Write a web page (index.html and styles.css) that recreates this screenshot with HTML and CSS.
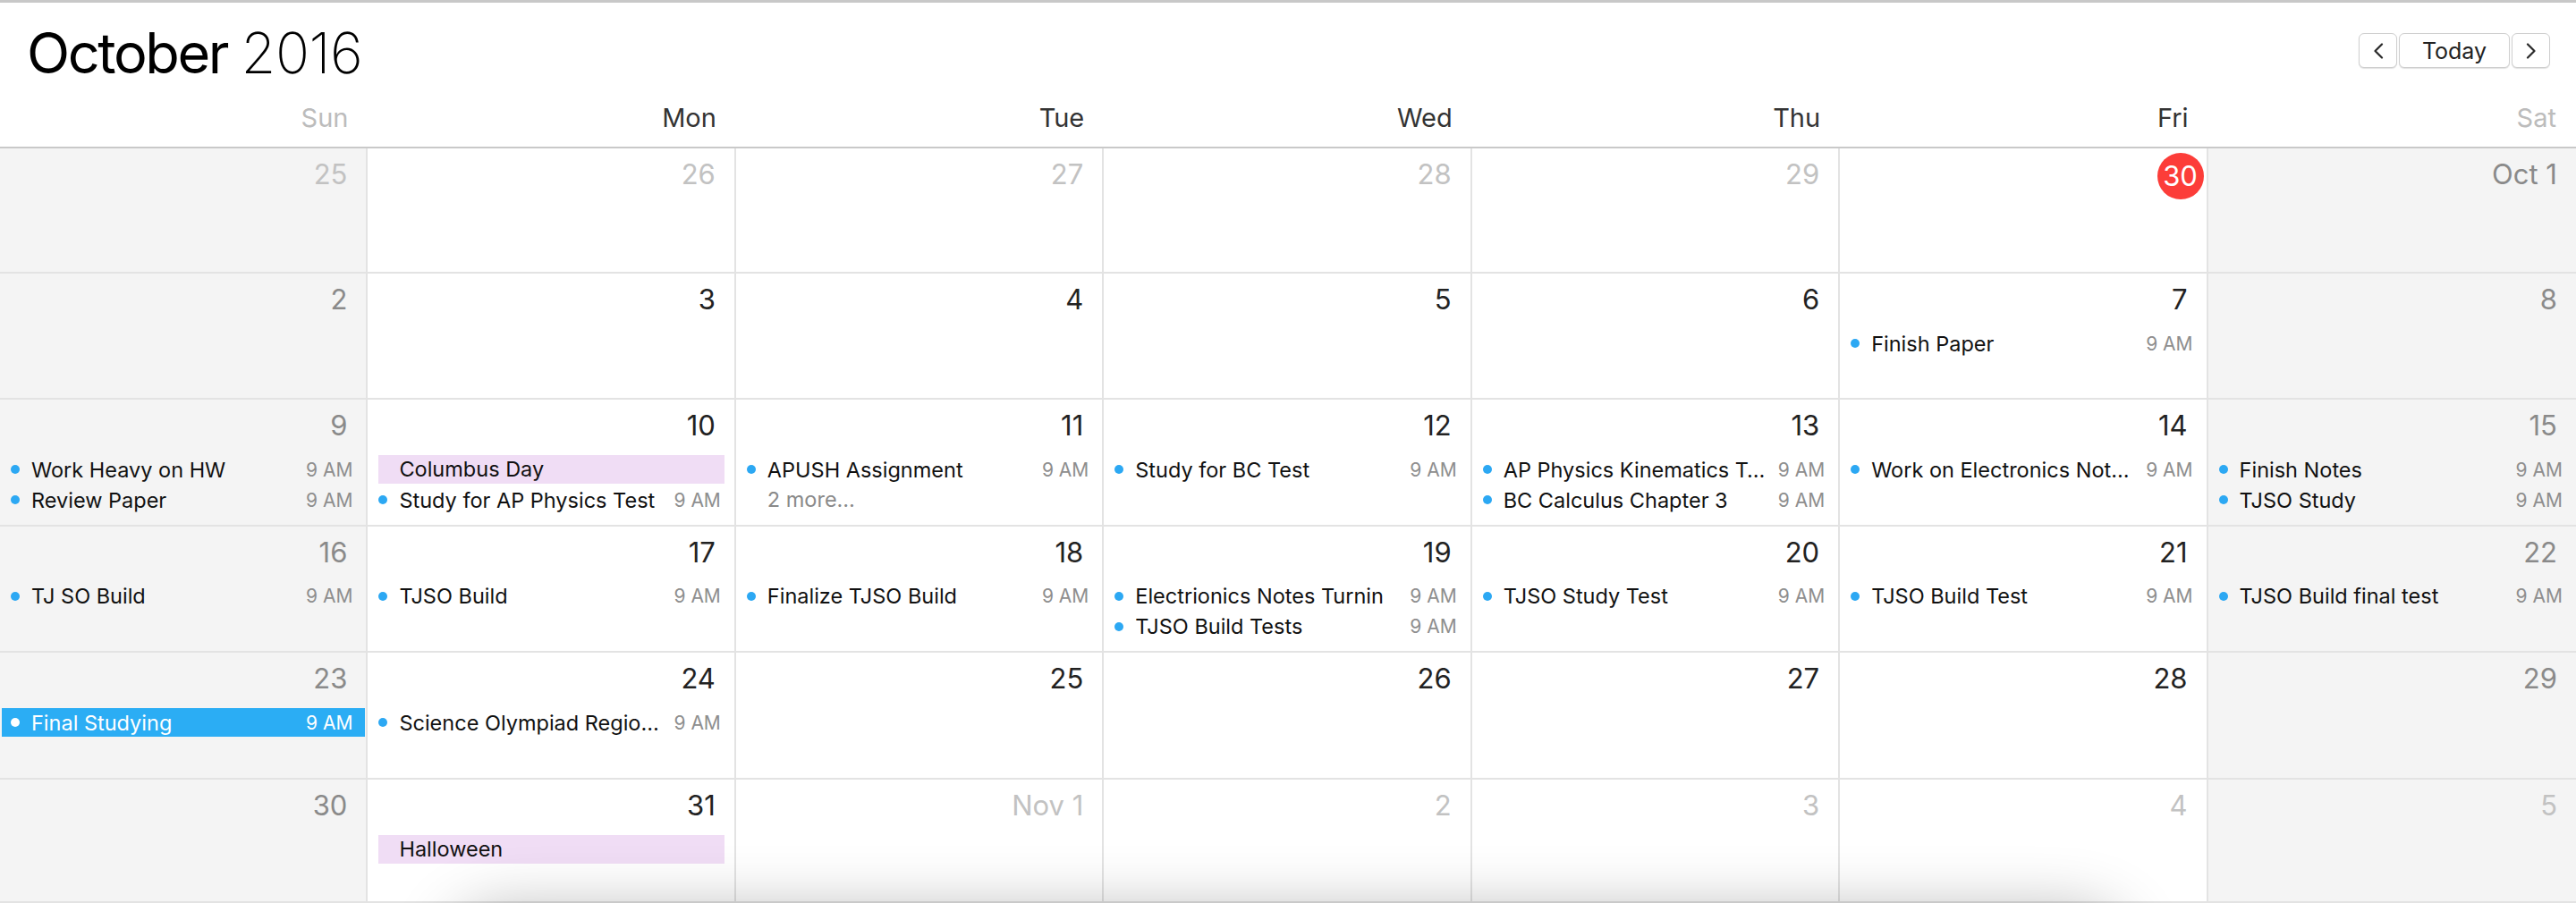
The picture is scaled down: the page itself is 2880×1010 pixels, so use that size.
FILE: index.html
```html
<!DOCTYPE html>
<html>
<head>
<meta charset="utf-8">
<link rel="stylesheet" href="styles.css">
</head>
<body>
<div class="app">
  <div class="topline"></div>
  <header class="titlebar">
    <h1 class="title"><span class="month">October</span> <span class="year">2016</span></h1>
    <div class="nav">
      <button class="btn btn-arrow" aria-label="Previous"><svg width="12" height="18" viewBox="0 0 12 18"><polyline points="10,1.5 2.5,9 10,16.5" fill="none" stroke="#2a2a2a" stroke-width="2.2" stroke-linecap="round" stroke-linejoin="round"/></svg></button>
      <button class="btn btn-today">Today</button>
      <button class="btn btn-arrow" aria-label="Next"><svg width="12" height="18" viewBox="0 0 12 18"><polyline points="2,1.5 9.5,9 2,16.5" fill="none" stroke="#2a2a2a" stroke-width="2.2" stroke-linecap="round" stroke-linejoin="round"/></svg></button>
    </div>
  </header>
  <div class="daynames">
    <div class="dn weekend">Sun</div>
    <div class="dn">Mon</div>
    <div class="dn">Tue</div>
    <div class="dn">Wed</div>
    <div class="dn">Thu</div>
    <div class="dn">Fri</div>
    <div class="dn weekend">Sat</div>
  </div>
  <div class="grid">
    <!-- Row 1 -->
    <div class="cell weekend"><div class="date other">25</div></div>
    <div class="cell"><div class="date other">26</div></div>
    <div class="cell"><div class="date other">27</div></div>
    <div class="cell"><div class="date other">28</div></div>
    <div class="cell"><div class="date other">29</div></div>
    <div class="cell"><div class="date"><span class="today">30</span></div></div>
    <div class="cell weekend"><div class="date wk">Oct 1</div></div>
    <!-- Row 2 -->
    <div class="cell weekend"><div class="date wk">2</div></div>
    <div class="cell"><div class="date">3</div></div>
    <div class="cell"><div class="date">4</div></div>
    <div class="cell"><div class="date">5</div></div>
    <div class="cell"><div class="date">6</div></div>
    <div class="cell"><div class="date">7</div>
      <div class="ev"><span class="dot"></span><span class="name">Finish Paper</span><span class="time">9 AM</span></div>
    </div>
    <div class="cell weekend"><div class="date wk">8</div></div>
    <!-- Row 3 -->
    <div class="cell weekend"><div class="date wk">9</div>
      <div class="ev"><span class="dot"></span><span class="name">Work Heavy on HW</span><span class="time">9 AM</span></div>
      <div class="ev"><span class="dot"></span><span class="name">Review Paper</span><span class="time">9 AM</span></div>
    </div>
    <div class="cell"><div class="date">10</div>
      <div class="allday">Columbus Day</div>
      <div class="ev"><span class="dot"></span><span class="name">Study for AP Physics Test</span><span class="time">9 AM</span></div>
    </div>
    <div class="cell"><div class="date">11</div>
      <div class="ev"><span class="dot"></span><span class="name">APUSH Assignment</span><span class="time">9 AM</span></div>
      <div class="more">2 more…</div>
    </div>
    <div class="cell"><div class="date">12</div>
      <div class="ev"><span class="dot"></span><span class="name">Study for BC Test</span><span class="time">9 AM</span></div>
    </div>
    <div class="cell"><div class="date">13</div>
      <div class="ev"><span class="dot"></span><span class="name">AP Physics Kinematics T…</span><span class="time">9 AM</span></div>
      <div class="ev"><span class="dot"></span><span class="name">BC Calculus Chapter 3</span><span class="time">9 AM</span></div>
    </div>
    <div class="cell"><div class="date">14</div>
      <div class="ev"><span class="dot"></span><span class="name">Work on Electronics Not…</span><span class="time">9 AM</span></div>
    </div>
    <div class="cell weekend"><div class="date wk">15</div>
      <div class="ev"><span class="dot"></span><span class="name">Finish Notes</span><span class="time">9 AM</span></div>
      <div class="ev"><span class="dot"></span><span class="name">TJSO Study</span><span class="time">9 AM</span></div>
    </div>
    <!-- Row 4 -->
    <div class="cell weekend"><div class="date wk">16</div>
      <div class="ev"><span class="dot"></span><span class="name">TJ SO Build</span><span class="time">9 AM</span></div>
    </div>
    <div class="cell"><div class="date">17</div>
      <div class="ev"><span class="dot"></span><span class="name">TJSO Build</span><span class="time">9 AM</span></div>
    </div>
    <div class="cell"><div class="date">18</div>
      <div class="ev"><span class="dot"></span><span class="name">Finalize TJSO Build</span><span class="time">9 AM</span></div>
    </div>
    <div class="cell"><div class="date">19</div>
      <div class="ev"><span class="dot"></span><span class="name">Electrionics Notes Turnin</span><span class="time">9 AM</span></div>
      <div class="ev"><span class="dot"></span><span class="name">TJSO Build Tests</span><span class="time">9 AM</span></div>
    </div>
    <div class="cell"><div class="date">20</div>
      <div class="ev"><span class="dot"></span><span class="name">TJSO Study Test</span><span class="time">9 AM</span></div>
    </div>
    <div class="cell"><div class="date">21</div>
      <div class="ev"><span class="dot"></span><span class="name">TJSO Build Test</span><span class="time">9 AM</span></div>
    </div>
    <div class="cell weekend"><div class="date wk">22</div>
      <div class="ev"><span class="dot"></span><span class="name">TJSO Build final test</span><span class="time">9 AM</span></div>
    </div>
    <!-- Row 5 -->
    <div class="cell weekend"><div class="date wk">23</div>
      <div class="ev selected"><span class="dot"></span><span class="name">Final Studying</span><span class="time">9 AM</span></div>
    </div>
    <div class="cell"><div class="date">24</div>
      <div class="ev"><span class="dot"></span><span class="name">Science Olympiad Regio…</span><span class="time">9 AM</span></div>
    </div>
    <div class="cell"><div class="date">25</div></div>
    <div class="cell"><div class="date">26</div></div>
    <div class="cell"><div class="date">27</div></div>
    <div class="cell"><div class="date">28</div></div>
    <div class="cell weekend"><div class="date wk">29</div></div>
    <!-- Row 6 -->
    <div class="cell weekend"><div class="date wk">30</div></div>
    <div class="cell"><div class="date">31</div>
      <div class="allday">Halloween</div>
    </div>
    <div class="cell"><div class="date other">Nov 1</div></div>
    <div class="cell"><div class="date other">2</div></div>
    <div class="cell"><div class="date other">3</div></div>
    <div class="cell"><div class="date other">4</div></div>
    <div class="cell weekend"><div class="date other">5</div></div>
  </div>
  <div class="bottom-shadow"></div>
</div>
</body>
</html>
```

FILE: styles.css
```css
* { box-sizing: border-box; }
html, body {
  margin: 0;
  padding: 0;
  background: #ffffff;
}
body {
  width: 2880px;
  height: 1010px;
  overflow: hidden;
  font-family: "Inter", "Helvetica Neue", "Liberation Sans", Arial, sans-serif;
  color: #222;
}
.app {
  position: relative;
  width: 2880px;
  height: 1010px;
  overflow: hidden;
  display: flex;
  flex-direction: column;
}
.topline {
  height: 3px;
  background: #c8c8c8;
  flex: none;
}
.titlebar {
  flex: none;
  height: 96px;
  display: flex;
  align-items: flex-start;
  justify-content: space-between;
  padding: 0 29px 0 30px;
}
.title {
  margin: 0;
  margin-top: 18px;
  font-size: 63px;
  line-height: 76px;
  font-weight: 400;
  letter-spacing: -2.4px;
  color: #000;
  white-space: nowrap;
}
.title .year {
  font-weight: 200;
  letter-spacing: -0.5px;
}
.nav {
  display: flex;
  gap: 2px;
  margin-top: 34px;
}
.btn {
  height: 39px;
  border: 1px solid #cfcfcf;
  border-radius: 6px;
  background: #fff;
  box-shadow: 0 1px 1px rgba(0,0,0,0.12);
  display: flex;
  align-items: center;
  justify-content: center;
  padding: 0;
  font-family: inherit;
  color: #222;
}
.btn-arrow { width: 43px; }
.btn-today {
  width: 124px;
  font-size: 25px;
  font-weight: 400;
}
.daynames {
  flex: none;
  height: 67px;
  display: grid;
  grid-template-columns: repeat(7, 1fr);
  border-bottom: 2px solid #c9c9c9;
}
.dn {
  text-align: right;
  padding-right: 22px;
  padding-top: 15px;
  font-size: 29px;
  line-height: 36px;
  color: #333;
}
.dn.weekend { color: #bcbcbc; }

.grid {
  flex: 1;
  display: grid;
  grid-template-columns: repeat(7, 1fr);
  grid-template-rows: 140px 141px 141.5px 141.5px 142px 1fr;
}
.cell {
  border-right: 2px solid #e3e3e3;
  border-bottom: 2px solid #e3e3e3;
  background: #fff;
  min-width: 0;
  overflow: hidden;
}
.cell:nth-child(7n) { border-right: none; }
.cell.weekend { background: #f4f4f4; }

.date {
  text-align: right;
  padding: 11px 21px 0 0;
  height: 62px;
  font-size: 31px;
  line-height: 36px;
  color: #222;
}
.date.wk { color: #8a8a8a; }
.date.other { color: #c2c2c2; }
.today {
  display: inline-flex;
  align-items: center;
  justify-content: center;
  width: 52px;
  height: 52px;
  border-radius: 50%;
  background: #fc3d39;
  color: #fff;
  margin-right: -18px;
  margin-top: -6px;
  vertical-align: top;
}

.ev {
  display: flex;
  align-items: center;
  height: 32px;
  margin: 0 1px 2px 2px;
  padding: 0 14px 0 10px;
  font-size: 23.5px;
  color: #111;
}
.ev .dot {
  flex: none;
  width: 10px;
  height: 10px;
  border-radius: 50%;
  background: #2ca8f3;
  margin-right: 13px;
}
.ev .name {
  flex: 1;
  min-width: 0;
  white-space: nowrap;
  overflow: hidden;
  text-overflow: ellipsis;
}
.ev .time {
  flex: none;
  margin-left: 10px;
  font-size: 21px;
  color: #8e8e8e;
}
.ev.selected {
  background: #2badf4;
  color: #fff;
}
.ev.selected .dot { background: #fff; }
.ev.selected .time { color: #fff; }

.allday {
  height: 32px;
  margin: 0 11px 2px 12px;
  padding-left: 23px;
  background: #f0ddf5;
  font-size: 23.5px;
  line-height: 32px;
  color: #111;
  white-space: nowrap;
}
.more {
  height: 32px;
  padding-left: 35px;
  font-size: 23.5px;
  line-height: 32px;
  color: #8a8a8a;
}

.bottom-shadow {
  position: absolute;
  left: 520px;
  top: 1035px;
  width: 1840px;
  height: 200px;
  border-radius: 40px;
  box-shadow: 0 0 70px 15px rgba(0,0,0,0.3);
  pointer-events: none;
}
```
